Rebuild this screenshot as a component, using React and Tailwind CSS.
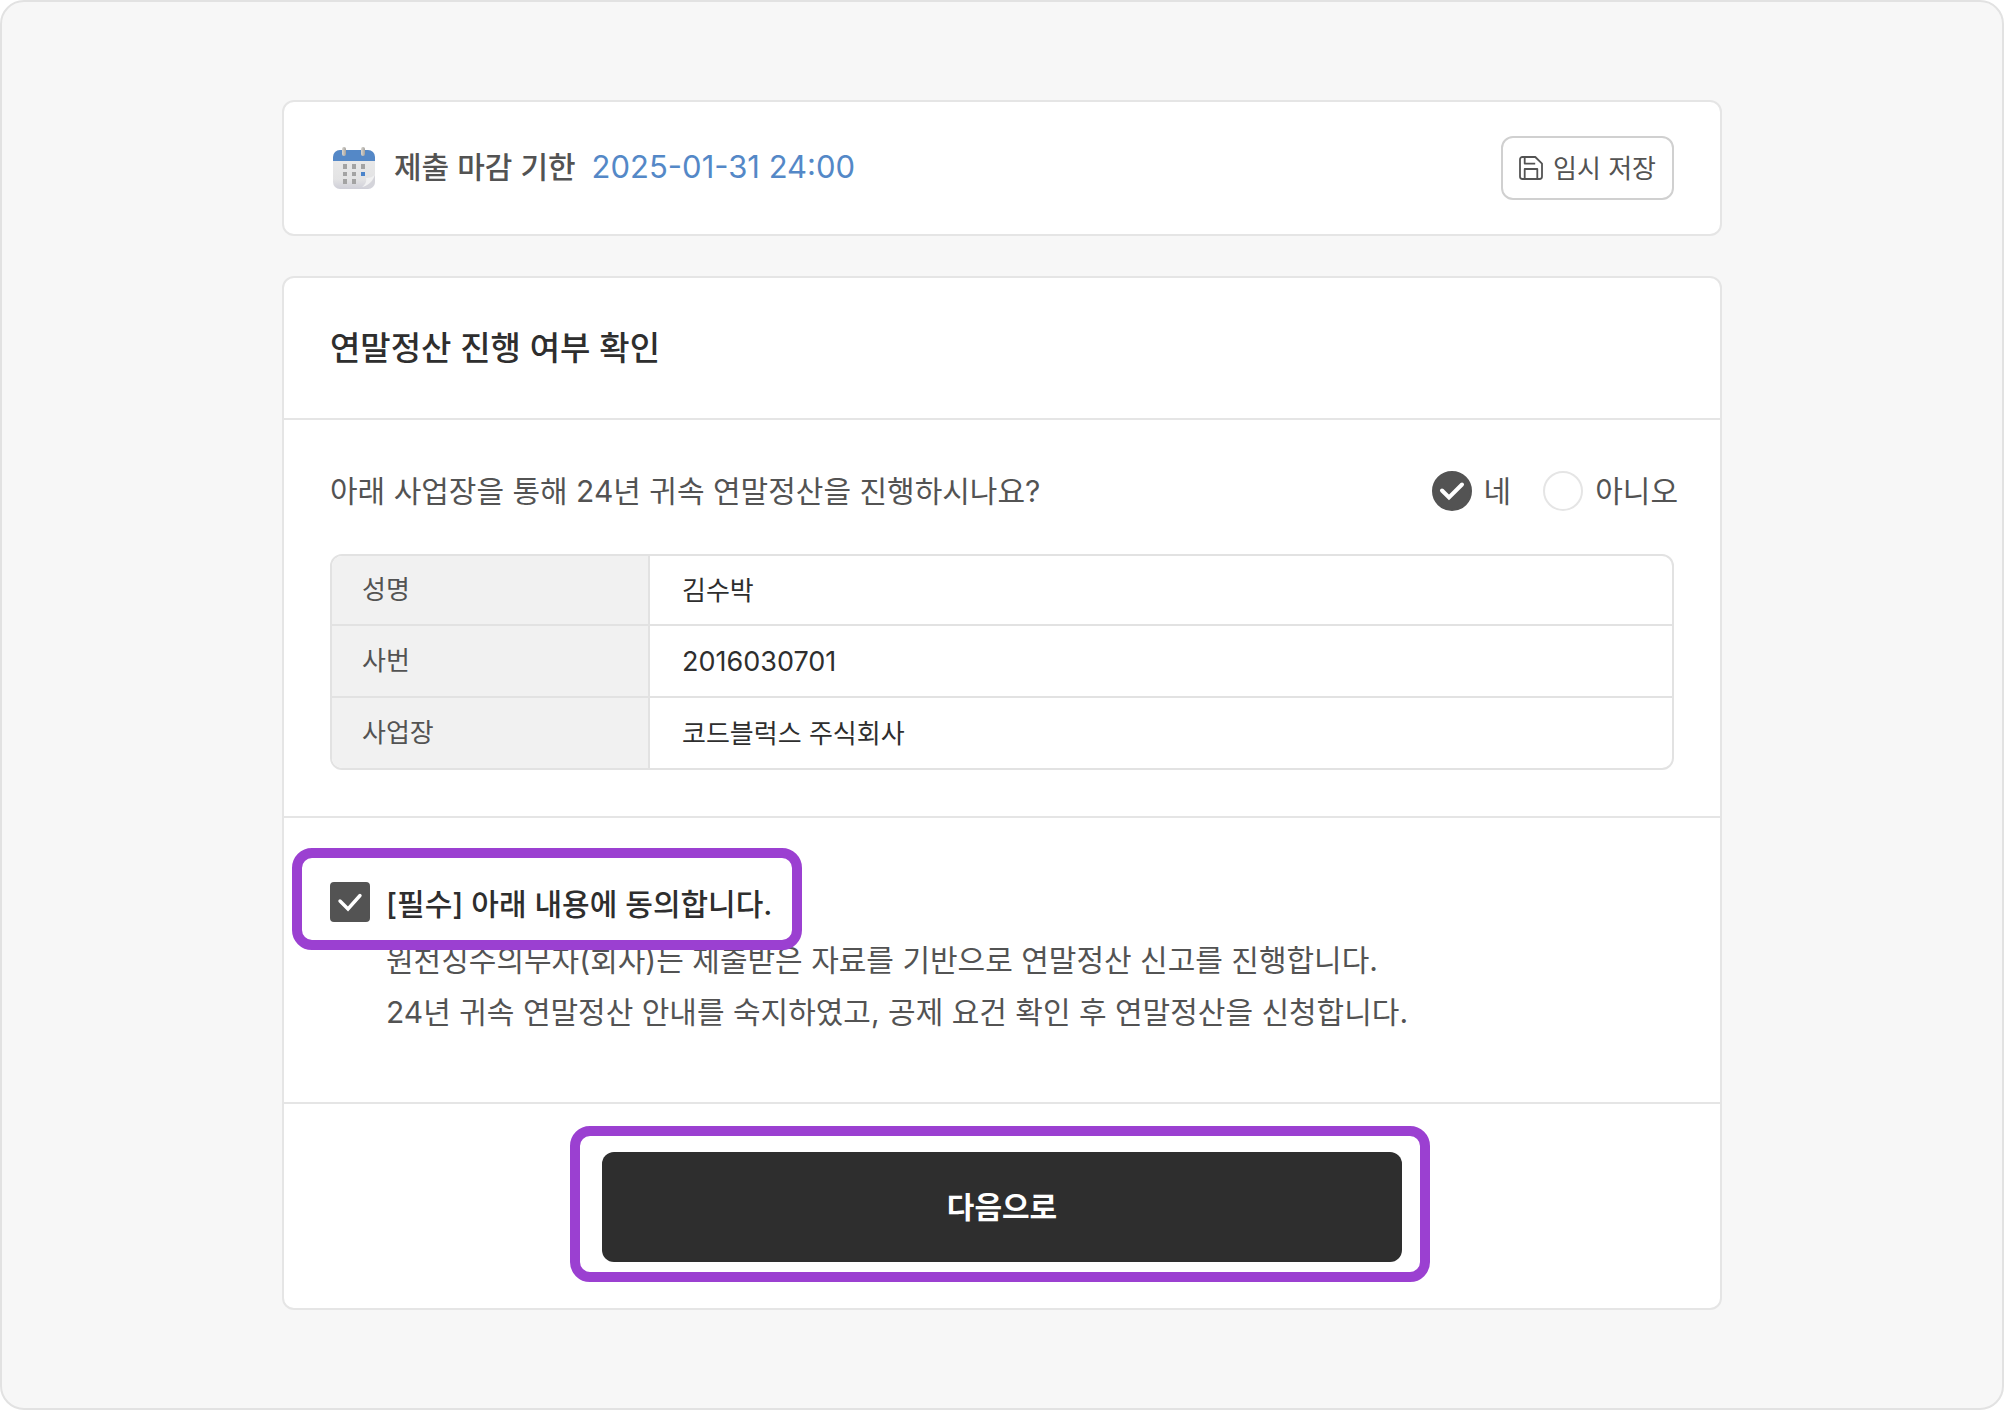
import React, { useState } from 'react';

const employee = [
  { label: '성명', value: '김수박' },
  { label: '사번', value: '2016030701' },
  { label: '사업장', value: '코드블럭스 주식회사' },
];

const CalendarIcon = () => (
  <svg className="w-12 h-12 shrink-0" viewBox="0 0 48 48" aria-hidden="true">
    <defs>
      <linearGradient id="calendar-paper" x1="0" y1="0" x2="0" y2="1">
        <stop offset="0" stopColor="#ececec" />
        <stop offset="0.75" stopColor="#e3e3e4" />
        <stop offset="1" stopColor="#cfcfd8" />
      </linearGradient>
      <linearGradient id="calendar-ring" x1="0" y1="0" x2="1" y2="0">
        <stop offset="0" stopColor="#d9d6d0" />
        <stop offset="1" stopColor="#a5a29d" />
      </linearGradient>
    </defs>
    <rect x="3" y="6" width="42" height="39" rx="7" fill="url(#calendar-paper)" />
    <path d="M3 17v-4a7 7 0 0 1 7-7h28a7 7 0 0 1 7 7v4z" fill="#5488c7" />
    <path d="M45 30c-2 3-5 4-9 4 1 4-1 7-4 9 6-1 11-6 13-13z" fill="#f1f1f2" />
    <path d="M45 31c-2 7-7 11-13 13h6a7 7 0 0 0 7-7z" fill="#d4d4da" />
    <rect x="12" y="3" width="4" height="9" rx="2" fill="url(#calendar-ring)" />
    <rect x="31" y="3" width="4" height="9" rx="2" fill="url(#calendar-ring)" />
    <g fill="#a3a3a3">
      <rect x="13" y="20" width="4" height="5" />
      <rect x="22" y="20" width="4" height="5" />
      <rect x="31" y="20" width="4" height="5" />
      <rect x="13" y="28" width="4" height="4" />
      <rect x="22" y="28" width="4" height="4" />
      <rect x="13" y="35" width="4" height="5" />
      <rect x="22" y="35" width="4" height="5" />
    </g>
    <rect x="31" y="28" width="4" height="4" fill="#4b84cb" />
  </svg>
);

const SaveIcon = () => (
  <svg
    className="w-6 h-6 shrink-0"
    viewBox="0 0 24 24"
    fill="none"
    stroke="currentColor"
    strokeWidth="1.8"
    strokeLinejoin="round"
    aria-hidden="true"
  >
    <path d="M3.5 1h12.8L23 7.7v12.8a2.5 2.5 0 0 1-2.5 2.5h-17A2.5 2.5 0 0 1 1 20.5v-17A2.5 2.5 0 0 1 3.5 1z" />
    <path d="M5.7 1v6.6h10.5" />
    <path d="M5.7 23V13h12.6v10" />
  </svg>
);

const CheckMark = ({ className, d, strokeWidth }) => (
  <svg className={className} viewBox="0 0 40 40" fill="none" aria-hidden="true">
    <path d={d} stroke="#fff" strokeWidth={strokeWidth} strokeLinecap="round" />
  </svg>
);

const RadioOption = ({ label, value, selected, onSelect }) => (
  <label className="flex items-center gap-3 cursor-pointer">
    <span className="relative flex">
      <input
        type="radio"
        name="proceed"
        value={value}
        checked={selected}
        onChange={() => onSelect(value)}
        className="peer appearance-none w-10 h-10 rounded-full border-2 border-[#e5e5e5] bg-white checked:border-[#535353] checked:bg-[#535353]"
      />
      <CheckMark
        className="absolute inset-0 w-10 h-10 pointer-events-none hidden peer-checked:block"
        d="M10 19.5l7 7L30 13.5"
        strokeWidth="4"
      />
    </span>
    {label}
  </label>
);

const App = () => {
  const [proceed, setProceed] = useState('yes');
  const [agreed, setAgreed] = useState(true);

  return (
    <div className="bg-white font-['Inter','Noto_Sans_CJK_KR',sans-serif] text-[30px] text-[#535353]">
      <main className="min-h-screen rounded-3xl border-2 border-[#e2e2e2] bg-[#f7f7f7] px-6 py-[98px]">
        <div className="mx-auto flex w-full max-w-[1440px] flex-col gap-10">
          {/* Deadline */}
          <section className="flex items-center justify-between rounded-xl border-2 border-[#e5e5e5] bg-white px-[46px] py-[34px]">
            <div className="flex items-center gap-4">
              <CalendarIcon />
              <p className="flex items-baseline gap-4 pb-[2px] font-medium leading-[44px]">
                제출 마감 기한
                <time dateTime="2025-01-31T24:00" className="text-[31px] font-normal text-[#5488c7]">
                  2025-01-31 24:00
                </time>
              </p>
            </div>
            <button
              type="button"
              className="flex h-16 items-center gap-[10px] rounded-xl border-2 border-[#d0d0d0] bg-white px-4 text-[26px]"
            >
              <SaveIcon />
              임시 저장
            </button>
          </section>

          <section className="rounded-xl border-2 border-[#e5e5e5] bg-white">
            <header className="border-b-2 border-[#e5e5e5] px-[46px] py-12">
              <h1 className="text-[33px] font-medium leading-[44px] text-[#2e2e2e]">
                연말정산 진행 여부 확인
              </h1>
            </header>

            {/* Workplace check */}
            <div className="border-b-2 border-[#e5e5e5] px-[46px] pt-12 pb-[46px]">
              <div className="mb-10 flex h-[46px] items-center justify-between">
                <p>아래 사업장을 통해 24년 귀속 연말정산을 진행하시나요?</p>
                <div className="-mr-1 flex gap-8" role="radiogroup">
                  <RadioOption label="네" value="yes" selected={proceed === 'yes'} onSelect={setProceed} />
                  <RadioOption label="아니오" value="no" selected={proceed === 'no'} onSelect={setProceed} />
                </div>
              </div>
              <div className="overflow-hidden rounded-xl border-2 border-[#e2e2e2]">
                <table className="w-full border-separate border-spacing-0 text-left text-[26px] leading-[34px]">
                  <tbody>
                    {employee.map((row, i) => (
                      <tr key={row.label}>
                        <th
                          scope="row"
                          className={`w-[318px] border-r-2 border-[#e2e2e2] bg-[#f1f1f1] px-[30px] font-normal ${
                            i > 0 ? 'h-[72px] border-t-2' : 'h-[68px]'
                          }`}
                        >
                          {row.label}
                        </th>
                        <td
                          className={`border-[#e2e2e2] px-8 pt-[2px] text-[#2e2e2e] ${
                            i > 0 ? 'border-t-2' : ''
                          } ${/^\d+$/.test(row.value) ? 'text-[27px]' : ''}`}
                        >
                          {row.value}
                        </td>
                      </tr>
                    ))}
                  </tbody>
                </table>
              </div>
            </div>

            {/* Agreement */}
            <div className="border-b-2 border-[#e5e5e5] px-[46px] py-16">
              <div className="relative mb-3 flex w-fit">
                <label className="flex h-10 items-center gap-4 font-medium text-[#2e2e2e] cursor-pointer">
                  <span className="relative flex">
                    <input
                      type="checkbox"
                      checked={agreed}
                      onChange={(e) => setAgreed(e.target.checked)}
                      className="peer appearance-none w-10 h-10 rounded border-2 border-[#d0d0d0] bg-white checked:border-[#535353] checked:bg-[#535353]"
                    />
                    <CheckMark
                      className="absolute inset-0 w-10 h-10 pointer-events-none hidden peer-checked:block"
                      d="M10 19l8 8L30 13.5"
                      strokeWidth="3.4"
                    />
                  </span>
                  <span className="pt-1">[필수] 아래 내용에 동의합니다.</span>
                </label>
                <div className="absolute -left-[38px] -right-[30px] -top-[34px] -bottom-7 rounded-[20px] border-10 border-[#9b40d1] pointer-events-none" />
              </div>
              <p className="pl-14 leading-[52px]">
                원천징수의무자(회사)는 제출받은 자료를 기반으로 연말정산 신고를 진행합니다.
                <br />
                24년 귀속 연말정산 안내를 숙지하였고, 공제 요건 확인 후 연말정산을 신청합니다.
              </p>
            </div>

            <footer className="flex justify-center px-[46px] pt-12 pb-[46px]">
              <div className="relative w-full max-w-[800px]">
                <button
                  type="button"
                  className="h-[110px] w-full rounded-xl bg-[#2e2e2e] font-semibold text-white"
                >
                  다음으로
                </button>
                <div className="absolute -left-8 -right-7 -top-[26px] -bottom-5 rounded-[20px] border-10 border-[#9b40d1] pointer-events-none" />
              </div>
            </footer>
          </section>
        </div>
      </main>
    </div>
  );
};

export default App;
